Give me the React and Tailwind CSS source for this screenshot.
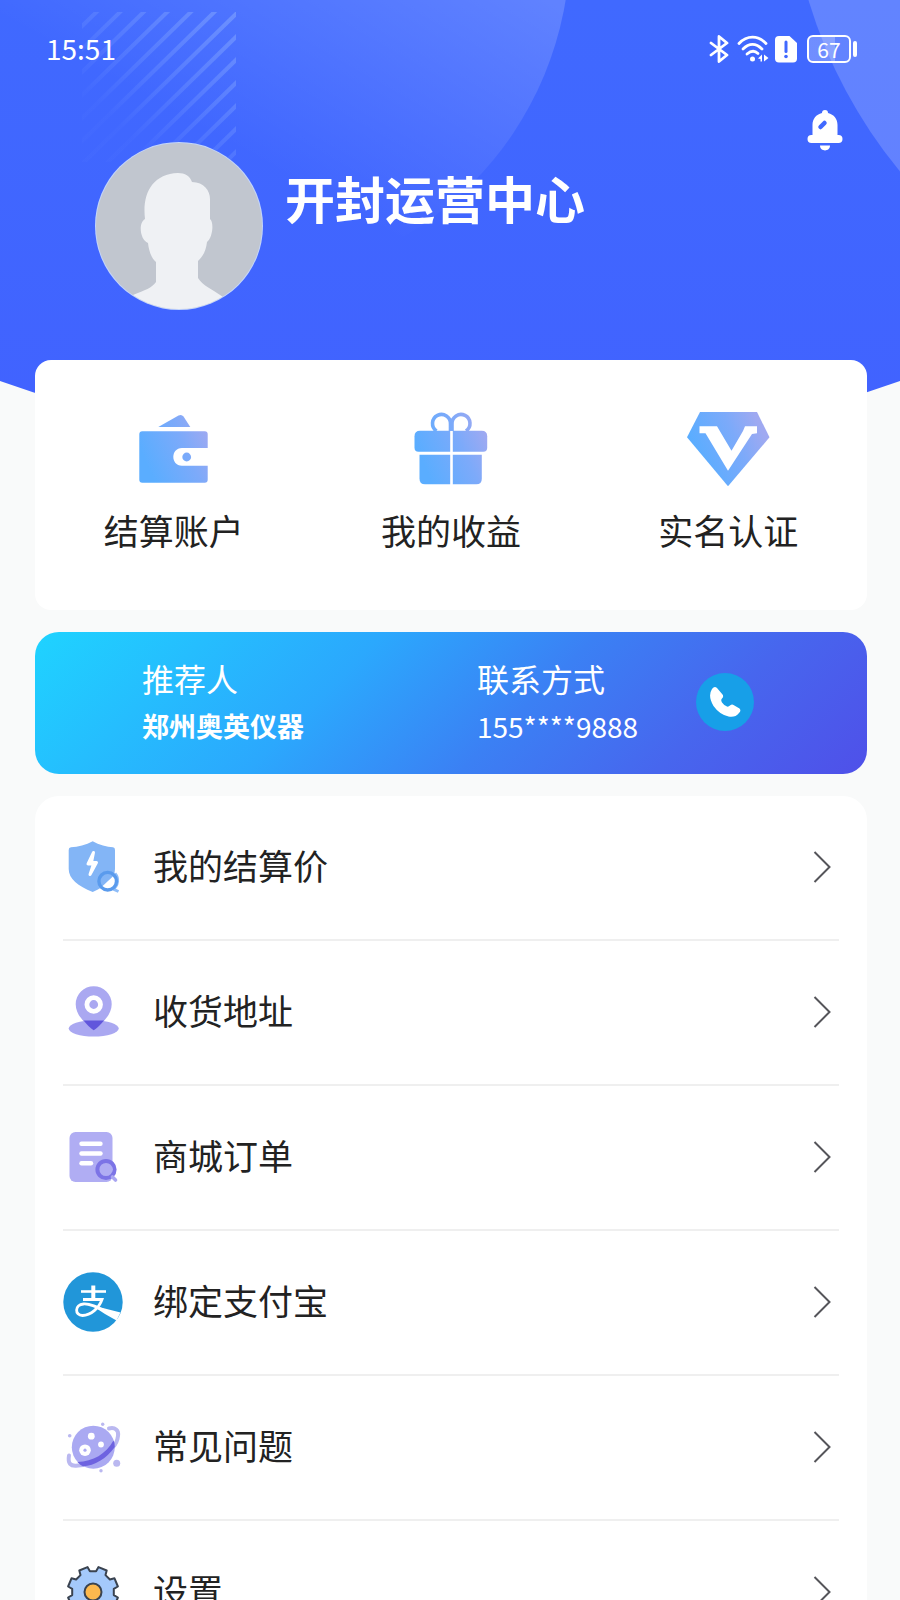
/**
 * App.jsx
 * "Mine" page of a mobile merchant app: profile header, shortcuts,
 * referrer card and the settings list.
 */

/** HeaderBackground: blue backdrop with two soft discs and diagonal stripes. */
function HeaderBackground() {
  return (
    <svg
      className="absolute inset-x-0 top-0 h-[480px] w-full"
      viewBox="0 0 900 480"
      preserveAspectRatio="xMidYMin slice"
      aria-hidden="true"
    >
      <defs>
        <linearGradient id="hdr" x1="0" y1="0" x2="0" y2="1">
          <stop offset="0" stopColor="#4069ff" />
          <stop offset="1" stopColor="#4162ff" />
        </linearGradient>
        <linearGradient id="disc" gradientUnits="userSpaceOnUse" x1="520" y1="-20" x2="380" y2="230">
          <stop offset="0" stopColor="#fff" stopOpacity="0.17" />
          <stop offset="1" stopColor="#fff" stopOpacity="0" />
        </linearGradient>
        <linearGradient id="stripe" gradientUnits="userSpaceOnUse" x1="236" y1="10" x2="120" y2="126">
          <stop offset="0" stopColor="#7da0ff" stopOpacity="0.65" />
          <stop offset="1" stopColor="#7da0ff" stopOpacity="0.04" />
        </linearGradient>
        <clipPath id="stripeBox">
          <rect x="82" y="12" width="154" height="150" />
        </clipPath>
      </defs>
      <path d="M0 0H900V381Q450 540 0 381Z" fill="url(#hdr)" />
      <circle cx="233" cy="-54" r="337" fill="url(#disc)" />
      <circle cx="1277" cy="-140" r="489" fill="#fff" fillOpacity="0.18" />
      <g clipPath="url(#stripeBox)" stroke="url(#stripe)" strokeWidth="4">
        {[-138, -115, -92, -69, -46, -23, 0, 23, 46, 69, 92, 115, 138].map((dy) => (
          <line key={dy} x1="76" y1={170 + dy} x2="240" y2={10 + dy} />
        ))}
      </g>
    </svg>
  );
}

/** StatusBar: clock on the left, system icons on the right. */
function StatusBar() {
  return (
    <div className="flex h-[98px] items-center justify-between pr-[43px] pl-[46px]">
      <time className="pb-0.5 text-[28px] leading-8">15:51</time>
      <div className="flex items-center">
        <svg width="20" height="28" viewBox="0 0 20 28" fill="none" stroke="currentColor" strokeWidth="2.800" strokeLinejoin="round" strokeLinecap="round" aria-label="蓝牙">
          <path d="M2 8L18 20L10 26.500V1.500L18 8L2 20" />
        </svg>
        <svg className="ml-2" width="32" height="28" viewBox="0 0 32 28" fill="none" stroke="currentColor" strokeWidth="2.800" strokeLinecap="round" aria-label="无线网络">
          <path d="M2 8.500C10 0 21 0 29 8.500" />
          <path d="M6 14C12 8 19 8 25 14" />
          <path d="M10 19C14 15.500 18 15.500 21 18.500" />
          <circle cx="15.500" cy="24" r="2.500" fill="currentColor" stroke="none" />
          <path d="M25 19.500V26.500H23.500V24L21 23.500ZM27 19.500L31.500 23L27 26.500Z" fill="currentColor" stroke="none" />
        </svg>
        <svg className="ml-1.5" width="22" height="28" viewBox="0 0 22 28" aria-label="提醒">
          <path d="M4 1H14.500L22 8V23.500Q22 27.500 18 27.500H4Q0 27.500 0 23.500V5Q0 1 4 1Z" fill="currentColor" />
          <path d="M11 7V16.500" stroke="#4069ff" strokeWidth="3" strokeLinecap="round" />
          <circle cx="11" cy="21.500" r="1.800" fill="#4069ff" />
        </svg>
        <div className="ml-2.5 flex items-center gap-0.5">
          <span className="flex h-7 w-[44px] items-center justify-center rounded-md border-2 border-current bg-linear-to-r from-white/25 from-65% to-transparent to-65% text-[21px] leading-5">
            67
          </span>
          <span className="h-4 w-1 rounded-sm bg-current" />
        </div>
      </div>
    </div>
  );
}

function Avatar() {
  return (
    <svg className="mt-8 shrink-0" width="168" height="168" viewBox="0 0 168 168" role="img" aria-label="头像">
      <defs>
        <clipPath id="avatarClip">
          <circle cx="84" cy="84" r="83" />
        </clipPath>
      </defs>
      <circle cx="84" cy="84" r="84" fill="#c3d5fb" />
      <g clipPath="url(#avatarClip)">
        <rect width="168" height="168" fill="#c1c6cf" />
        <path
          d="M83 31C90 31 95 34 97 40C109 40 115 49 115 57V77C119 80 118 95 112 100C111 108 109 113 103 119V136C108 144 117 147 128 155L150 180H15L38 153C50 148 57 146 61 140V120C57 117 54 110 53 101C45 98 43 81 50 77C47 52 57 32 83 31Z"
          fill="#eff1f4"
        />
      </g>
    </svg>
  );
}

function BellIcon() {
  return (
    <svg width="36" height="42" viewBox="0 0 36 42" fill="currentColor" aria-hidden="true">
      <path d="M15 3Q15 0 18 0Q21 0 21 3C27 4.500 30.500 9 30.500 15V25H31.500Q35.500 25 35.500 29Q35.500 33 31.500 33H4.500Q0.500 33 0.500 29Q0.500 25 4.500 25H5.500V15C5.500 9 9 4.500 15 3Z" />
      <path d="M13 35.500H23C23 42 13 42 13 35.500Z" />
      <path d="M13.500 17L17.500 13" stroke="#4069ff" strokeWidth="4.500" strokeLinecap="round" />
    </svg>
  );
}

/* Shortcut icons share one blue to violet gradient */
function IconGradient({ id }) {
  return (
    <linearGradient id={id} gradientUnits="userSpaceOnUse" x1="16" y1="56" x2="80" y2="28">
      <stop offset="0" stopColor="#5aadff" />
      <stop offset="0.6" stopColor="#7caafa" />
      <stop offset="1" stopColor="#9fa9f1" />
    </linearGradient>
  );
}

function WalletIcon() {
  return (
    <svg width="84" height="76" viewBox="0 0 84 76" fill="url(#gWallet)" aria-hidden="true">
      <defs><IconGradient id="gWallet" /></defs>
      <path d="M26.300 16L46.500 4.600Q49.500 3 51.500 5.500L58.300 16Z" />
      <path d="M10.300 20.300H72.700Q75.700 20.300 75.700 23.300V37H50C38.500 37 38.500 54.700 50 54.700H75.700V68.700Q75.700 71.700 72.700 71.700H10.300Q7.300 71.700 7.300 68.700V23.300Q7.300 20.300 10.300 20.300Z" />
      <circle cx="54.700" cy="46" r="4.400" />
    </svg>
  );
}

function GiftIcon() {
  return (
    <svg width="84" height="76" viewBox="0 0 84 76" fill="url(#gGift)" aria-hidden="true">
      <defs><IconGradient id="gGift" /></defs>
      <path d="M11 19.700H41.200V40.700H9.500Q5.500 40.700 5.500 36.700V25.200Q5.500 19.700 11 19.700Z" />
      <path d="M43.800 19.700H72.700Q78.200 19.700 78.200 25.200V36.700Q78.200 40.700 74.200 40.700H43.800Z" />
      <path d="M10.500 43.700H41.200V73.300H16Q10.500 73.300 10.500 67.800Z" />
      <path d="M43.800 43.700H72.800V67.800Q72.800 73.300 67.300 73.300H43.800Z" />
      <g fill="none" stroke="url(#gGift)" strokeWidth="3.600">
        <path d="M27.500 20A9 9 0 1 1 41.500 13V20" />
        <path d="M57 20A9 9 0 1 0 43 13V20" />
      </g>
    </svg>
  );
}

function DiamondIcon() {
  return (
    <svg width="84" height="76" viewBox="0 0 84 76" aria-hidden="true">
      <defs><IconGradient id="gDiamond" /></defs>
      <path d="M14 1H71L83.500 26.300L42 75.300L1 26.300Z" fill="url(#gDiamond)" />
      <path d="M13.500 15.300H31L45.500 39.700L57 20L59 15.300H71V22.300L66 23L42 59.700L19.500 22.300H13.500Z" fill="#fff" />
    </svg>
  );
}

function ShieldIcon() {
  return (
    <svg width="60" height="60" viewBox="0 0 60 60" aria-hidden="true">
      <path d="M29.700 4.200C36 8 44 10 50 10.300Q52 10.500 52 13V32C52 42 43 49 29.700 55C15 49 5.700 42 5.700 32V13Q5.700 10.500 8 10.300C15 10 23 8 29.700 4.200Z" fill="#83b5f6" />
      <path d="M30.500 15.500L25 27H30.500L27 37.500L33.500 25.500H28.500Z" fill="#fff" stroke="#fff" strokeWidth="3" strokeLinejoin="round" />
      <path d="M51.500 38A9.500 9.500 0 0 1 38 50.500Z" fill="#fff" />
      <path d="M52 36.500A10.500 10.500 0 0 1 50 52L55.500 54.500" fill="none" stroke="#8fbdf8" strokeWidth="3" />
      <circle cx="44.700" cy="44.200" r="8.800" fill="none" stroke="#5a9bed" strokeWidth="3.400" />
    </svg>
  );
}

function PinIcon() {
  return (
    <svg width="60" height="60" viewBox="0 0 60 60" aria-hidden="true">
      <ellipse cx="30.700" cy="46.500" rx="25" ry="8" fill="#aaa8f1" />
      <path d="M30.700 48.200C24 43 12.700 34 12.700 22.200A18 18 0 0 1 48.700 22.200C48.700 34 37 43 30.700 48.200Z" fill="#aaa8f1" />
      <path d="M20.500 38.500H41C37.500 43 34 46 30.700 48.200C27.500 46 24 43 20.500 38.500Z" fill="#6156dc" />
      <circle cx="30.700" cy="22.500" r="6.800" fill="none" stroke="#fff" strokeWidth="4.800" />
    </svg>
  );
}

function OrderIcon() {
  return (
    <svg width="60" height="60" viewBox="0 0 60 60" fill="none" strokeLinecap="round" aria-hidden="true">
      <rect x="6.500" y="5" width="43" height="50" rx="6" fill="#b0adf3" />
      <g stroke="#fff" strokeWidth="4.400">
        <path d="M18.500 16.800H37.500" />
        <path d="M18.500 26.500H37.500" />
        <path d="M18.500 36.200H28" />
      </g>
      <circle cx="43" cy="42.500" r="8.600" stroke="#7c74e6" strokeWidth="4" />
      <path d="M49.500 50L52.500 53" stroke="#a9a5f1" strokeWidth="3.600" />
    </svg>
  );
}

function AlipayIcon() {
  return (
    <svg className="shrink-0" width="60" height="60" viewBox="0 0 60 60" fill="none" stroke="#fff" aria-hidden="true">
      <circle cx="30" cy="30" r="29.700" fill="#2196d9" stroke="none" />
      <path d="M18 19.500H43" strokeWidth="2.600" />
      <path d="M30.300 13.500V28" strokeWidth="4" />
      <path d="M20 27.500H39C36 36 28 43.500 19.500 43.500C11.500 43.500 11.500 32.500 20.500 32C27 31.500 34 35 42 39" strokeWidth="2.800" />
      <path d="M32 34L57.500 40.500L53.500 48.500Q42 42.500 32 35.500Z" fill="#fff" stroke="none" />
    </svg>
  );
}

function PlanetIcon() {
  return (
    <svg width="60" height="60" viewBox="0 0 60 60" aria-hidden="true">
      <g fill="none" stroke="#bab8f0" strokeWidth="4" strokeLinecap="round">
        <path d="M46 11.500C52 10 56 13 55 19C54.500 23 53 27 50 30" />
        <path d="M6 38.500C4.500 47 8 49 13 48.700L20 48" />
      </g>
      <circle cx="30.300" cy="30.200" r="21.500" fill="#aaa9f2" />
      <path d="M14.500 45C30 44.500 43 37 50.500 23.500Q52 26 51.800 30C43 42 32 48.500 20 49.300Q17 48 14.500 45Z" fill="#6e63e0" />
      <g fill="#fff">
        <circle cx="28.300" cy="19.200" r="3.400" />
        <circle cx="38" cy="27.500" r="2.900" />
        <circle cx="22" cy="33.200" r="5.800" />
      </g>
      <circle cx="22" cy="33.200" r="1.600" fill="#aaa9f2" />
      <g fill="#bab8f0">
        <circle cx="39.700" cy="7.200" r="1.700" />
        <circle cx="6.700" cy="18.800" r="1.800" />
        <circle cx="53.700" cy="46.200" r="3.500" />
        <circle cx="38" cy="53.800" r="1.700" />
      </g>
    </svg>
  );
}

/** gearPath: outline of an eight-tooth gear around (30, 30). */
function gearPath() {
  const points = [];
  for (let tooth = 0; tooth < 8; tooth += 1) {
    const mid = 22.5 + tooth * 45;
    [[-14, 21], [-10, 25.5], [10, 25.5], [14, 21]].forEach(([delta, radius]) => {
      const angle = ((mid + delta) * Math.PI) / 180;
      points.push(`${(30 + radius * Math.sin(angle)).toFixed(1)} ${(30 - radius * Math.cos(angle)).toFixed(1)}`);
    });
  }
  return `M${points.join('L')}Z`;
}

function GearIcon() {
  return (
    <svg width="60" height="60" viewBox="0 0 60 60" stroke="#3a4350" strokeWidth="2" strokeLinejoin="round" aria-hidden="true">
      <path d={gearPath()} fill="#a4c9fb" />
      <circle cx="30" cy="30" r="8.500" fill="#fdb94e" />
    </svg>
  );
}

const SHORTCUTS = [
  { label: '结算账户', Icon: WalletIcon },
  { label: '我的收益', Icon: GiftIcon },
  { label: '实名认证', Icon: DiamondIcon },
];

const MENU = [
  { label: '我的结算价', Icon: ShieldIcon },
  { label: '收货地址', Icon: PinIcon },
  { label: '商城订单', Icon: OrderIcon },
  { label: '绑定支付宝', Icon: AlipayIcon },
  { label: '常见问题', Icon: PlanetIcon },
  { label: '设置', Icon: GearIcon },
];

/** MenuRow: one tappable line of the settings list. */
function MenuRow({ label, Icon }) {
  return (
    <li className="border-b-2 border-[#efefef] last:border-b-0">
      <a href="#" className="flex h-[143px] items-center pr-2 pb-0.5">
        <Icon />
        <span className="ml-[30px] pb-1 text-[35px] leading-[48px]">{label}</span>
        <svg className="ml-auto" width="18" height="32" viewBox="0 0 18 32" fill="none" stroke="#55555a" strokeWidth="2" aria-hidden="true">
          <path d="M1.500 1L16.500 16L1.500 31" />
        </svg>
      </a>
    </li>
  );
}

export default function App() {
  return (
    <div className="relative h-screen overflow-y-auto bg-[#f9fafa] font-['Noto_Sans_CJK_SC','Noto_Sans',sans-serif] text-[#222]">
      <HeaderBackground />

      <div className="relative">
        <header className="text-white">
          <StatusBar />
          <div className="flex items-start pt-3 pr-[57px] pb-[50px] pl-[95px]">
            <Avatar />
            <h1 className="mt-[53px] ml-[22px] text-[50px] font-bold leading-[68px]">开封运营中心</h1>
            <button type="button" aria-label="消息通知" className="ml-auto">
              <BellIcon />
            </button>
          </div>
        </header>

        <main className="flex flex-col gap-[22px] pr-[33px] pl-[35px]">
          <nav className="grid grid-cols-3 rounded-2xl bg-white pt-[51px] pb-[55px]">
            {SHORTCUTS.map(({ label, Icon }) => (
              <a key={label} href="#" className="flex flex-col items-center gap-[18px]">
                <Icon />
                <span className="text-[35px] leading-[50px]">{label}</span>
              </a>
            ))}
          </nav>

          <section className="flex h-[142px] items-center rounded-3xl bg-[linear-gradient(135deg,#1fd3ff_0%,#2ba8fd_36%,#3b80f4_58%,#4766ee_78%,#4f50e9_100%)] pb-0.5 pl-[107px] text-white">
            <div className="w-[335px]">
              <p className="text-[32px] leading-[48px]">推荐人</p>
              <p className="text-[27px] font-bold leading-[48px]">郑州奥英仪器</p>
            </div>
            <div className="w-[219px]">
              <p className="text-[32px] leading-[48px]">联系方式</p>
              <p className="text-[28px] leading-[48px]">155****9888</p>
            </div>
            <button type="button" aria-label="拨打电话" className="flex size-[58px] items-center justify-center rounded-full bg-[#179fe8]">
              <svg width="32" height="32" viewBox="0 0 32 32" fill="currentColor" aria-hidden="true">
                <path d="M3 3Q5.500 -0.500 8 2L13.500 8.500Q15 10.500 13 12.500Q11.500 14 13 16.500Q15 19.500 18 20.500Q19.500 21 21 19.500Q23 18 24.500 19L30.500 22.500Q32.500 24.500 30 27Q26 32 19.500 30.500Q10.500 28.500 4.500 20Q-1.500 10 3 3Z" />
              </svg>
            </button>
          </section>

          <ul className="rounded-3xl bg-white px-7">
            {MENU.map((item) => (
              <MenuRow key={item.label} {...item} />
            ))}
          </ul>
        </main>
      </div>
    </div>
  );
}
